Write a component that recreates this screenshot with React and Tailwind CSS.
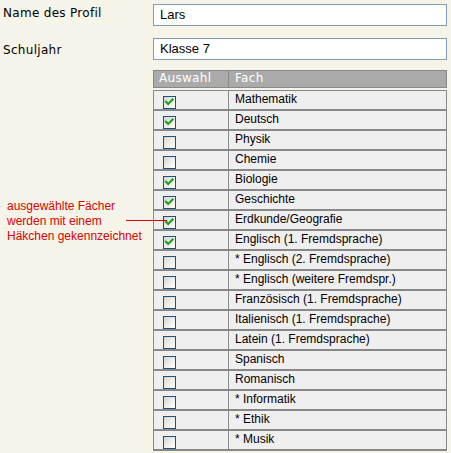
import React from "react";

const subjects = [
  { name: "Mathematik", checked: true },
  { name: "Deutsch", checked: true },
  { name: "Physik", checked: false },
  { name: "Chemie", checked: false },
  { name: "Biologie", checked: true },
  { name: "Geschichte", checked: true },
  { name: "Erdkunde/Geografie", checked: true },
  { name: "Englisch (1. Fremdsprache)", checked: true },
  { name: "* Englisch (2. Fremdsprache)", checked: false },
  { name: "* Englisch (weitere Fremdspr.)", checked: false },
  { name: "Französisch (1. Fremdsprache)", checked: false },
  { name: "Italienisch (1. Fremdsprache)", checked: false },
  { name: "Latein (1. Fremdsprache)", checked: false },
  { name: "Spanisch", checked: false },
  { name: "Romanisch", checked: false },
  { name: "* Informatik", checked: false },
  { name: "* Ethik", checked: false },
  { name: "* Musik", checked: false },
];

const Checkbox = ({ checked }) => (
  <div className="w-[13px] h-[13px] border border-[#1c5180] bg-gradient-to-br from-[#d6d6d0] via-[#ececea] to-white">
    {checked && (
      <svg width="11" height="11" viewBox="0 0 11 11">
        <path d="M2 4.8 L4.2 7 L8.6 2.6" fill="none" stroke="#21a121" strokeWidth="2.2" strokeLinecap="square" />
      </svg>
    )}
  </div>
);

const App = () => {
  return (
    <div className="relative w-[451px] h-[453px] bg-[#f6f4e9] overflow-hidden font-['DejaVu_Sans',sans-serif]">
      <div className="flex">
        {/* labels */}
        <div className="w-[153px] pl-[3px] pt-[6px] text-[12px] leading-[14px] tracking-[0.3px] text-black">
          <p>Name des Profil</p>
          <p className="mt-[23px]">Schuljahr</p>
        </div>

        {/* fields + table */}
        <div className="w-[294px] pt-[4px] font-['Liberation_Sans',Arial,sans-serif]">
          <div className="h-[22px] border border-[#7f9db9] bg-white pl-[6px] flex items-center text-[13px] text-black">
            Lars
          </div>
          <div className="mt-[12px] h-[22px] border border-[#7f9db9] bg-white pl-[6px] flex items-center text-[13px] text-black">
            Klasse 7
          </div>

          {/* header */}
          <div className="mt-[10px] h-[18px] border border-[#888] bg-[#aaa] flex text-white text-[12px] leading-[15px] font-['DejaVu_Sans',sans-serif] tracking-[0.3px]">
            <div className="w-[75px] border-r border-[#888] pl-[5px]">Auswahl</div>
            <div className="pl-[6px]">Fach</div>
          </div>

          {/* rows */}
          <div className="mt-[2px] border-t border-l border-r border-[#888]">
            {subjects.map((s, i) => (
              <div key={i} className="h-[20px] flex bg-[#efefef] border-b-2 border-[#888] text-[12px] leading-[14px] text-black">
                <div className="w-[75px] border-r border-[#888] pl-[9px] flex items-end">
                  <Checkbox checked={s.checked} />
                </div>
                <div className="pl-[6px] pt-[1px]">{s.name}</div>
              </div>
            ))}
          </div>
        </div>
      </div>

      {/* annotation */}
      <div className="absolute left-[7px] top-[199px] text-[12px] leading-[15px] text-[#dd0000] font-['Liberation_Sans',Arial,sans-serif]">
        <p>ausgewählte Fächer</p>
        <p>werden mit einem</p>
        <p>Häkchen gekennzeichnet</p>
      </div>
      <div className="absolute left-[126px] top-[220px] w-[41px] h-px bg-[#dd0000]" />
    </div>
  );
};

export default App;
